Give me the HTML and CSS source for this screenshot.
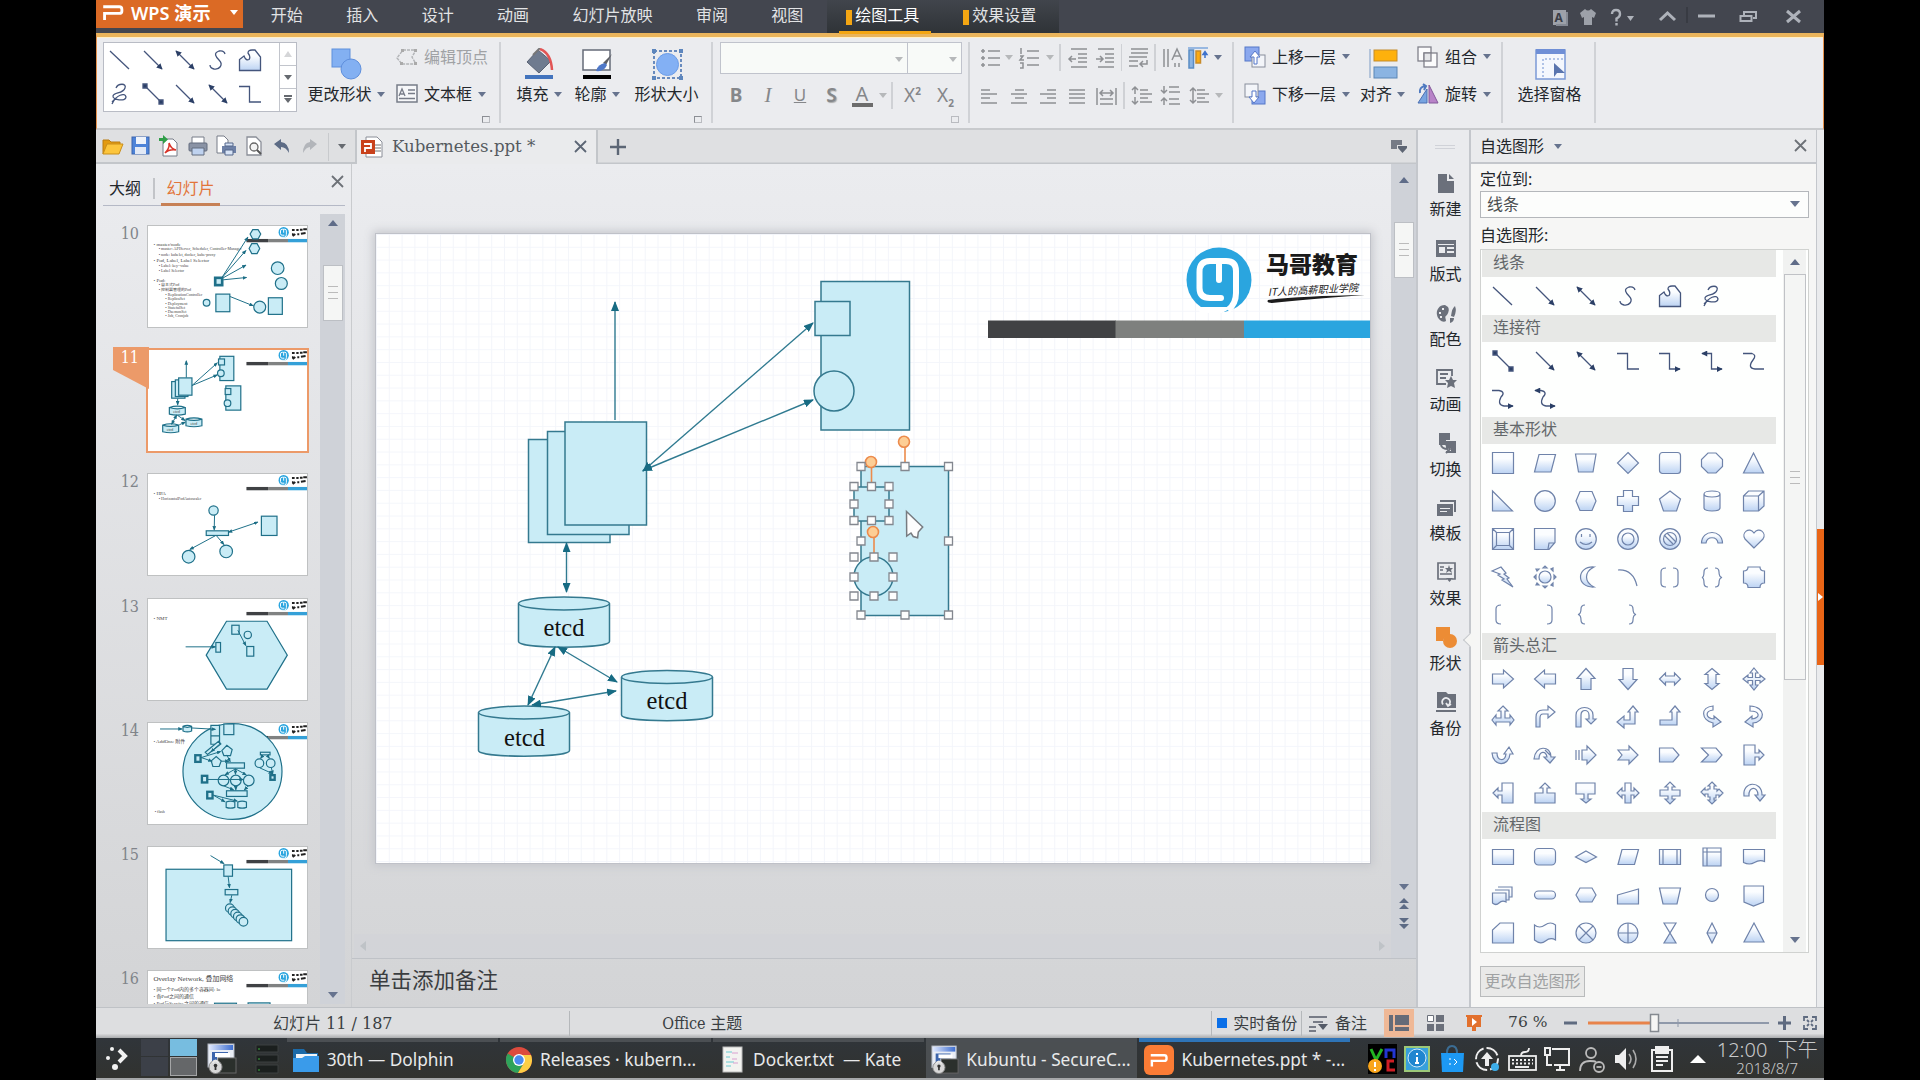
FILE: index.html
```html
<!DOCTYPE html>
<html lang="zh-CN">
<head>
<meta charset="utf-8">
<title>Kubernetes.ppt - WPS 演示</title>
<link rel="stylesheet" href="styles.css">
</head>
<body>
<svg class="defs" width="0" height="0">
  <defs>
    <linearGradient id="shade" x1="0" y1="0" x2="0" y2="1"><stop offset="0.3" stop-color="#fbfdff"/><stop offset="1" stop-color="#bcd3f3"/></linearGradient>
    <linearGradient id="term" x1="0" y1="0" x2="1" y2="0"><stop offset="0" stop-color="#dfe8ff"/><stop offset="1" stop-color="#3f6fd0"/></linearGradient>
    <marker id="tip" viewBox="0 0 10 8" refX="9" refY="4" markerWidth="10" markerHeight="8" markerUnits="userSpaceOnUse" orient="auto-start-reverse"><path d="M0 0L10 4L0 8z" fill="#176b83"/></marker>
    <marker id="tipS" viewBox="0 0 10 8" refX="8" refY="4" markerWidth="14" markerHeight="12" markerUnits="userSpaceOnUse" orient="auto-start-reverse"><path d="M0 0L10 4L0 8z" fill="#1b6d85"/></marker>
    <marker id="tipI" viewBox="0 0 8 8" refX="7" refY="4" markerWidth="6.500" markerHeight="6" markerUnits="userSpaceOnUse" orient="auto-start-reverse"><path d="M0 0L8 4L0 8z" fill="#2b3f66"/></marker>
    <symbol id="brand" viewBox="0 0 66 66">
      <circle cx="33" cy="33" r="32.5" fill="#2aa5df"/>
      <path d="M12 60H47L36 66H14z" fill="#fff"/>
      <path d="M33 33V14H24Q13.500 14 13.500 25V41Q13.500 51 24 51H35" fill="none" stroke="#fff" stroke-width="6" stroke-linecap="round"/>
      <path d="M33 14H40Q50 14 50 24V46Q50 57 42 63" fill="none" stroke="#fff" stroke-width="6"/>
    </symbol>
    <symbol id="head" viewBox="0 0 484 310">
      <rect x="299" y="42" width="65" height="10" fill="#3f4144"/><rect x="364" y="42" width="60" height="10" fill="#808282"/><rect x="424" y="42" width="60" height="10" fill="#34a0d8"/>
      <use href="#brand" x="395" y="6" width="32" height="32"/>
      <path d="M436 15h8M449 15h7M460 14h8M470 13h11M438 33l8-6M452 28h6M463 26l14-2M436 28h5" stroke="#222" stroke-width="6" fill="none"/>
    </symbol>
    <symbol id="securecrt" viewBox="0 0 30 32">
      <rect x="1" y="1" width="26" height="23" fill="#e9edf5" stroke="#aeb4bf"/><rect x="2" y="2" width="24" height="5" fill="url(#term)"/><path d="M5 9h16v5H10v9H5z" fill="#3b64ac"/><path d="M8 10h15v4H8z" fill="#fff"/>
      <rect x="11" y="15" width="18" height="15" fill="#2b302c" stroke="#666"/><circle cx="8.500" cy="24" r="6.500" fill="#d8d8d8" stroke="#888"/><path d="M5.500 20q3-5 6 0" stroke="#e8e8e8" stroke-width="2" fill="none"/><circle cx="8.500" cy="22.500" r="1.800" fill="#333"/><path d="M8.500 23v4" stroke="#333" stroke-width="1.800"/>
    </symbol>
    <symbol id="wpsmark" viewBox="0 0 24 18"><path d="M1 2H19Q22 2 22 5V7Q22 9.500 19 9.500H2.500V17" fill="none" stroke="#fff" stroke-width="3.200"/></symbol>
    <symbol id="i-line" viewBox="0 0 24 24"><path d="M2 3L21 21"/></symbol>
    <symbol id="i-arrow" viewBox="0 0 24 24"><path d="M3 3L21 21" marker-end="url(#tipI)"/></symbol>
    <symbol id="i-darrow" viewBox="0 0 24 24"><path d="M3 3L21 21" marker-end="url(#tipI)" marker-start="url(#tipI)"/></symbol>
    <symbol id="i-s" viewBox="0 0 24 24"><path d="M19 6Q18 2 13 3C7 5 10 9 13 12C18 17 13 22 8 21Q4 20 4 17"/></symbol>
    <symbol id="i-free" viewBox="0 0 24 24"><path d="M1.500 22.500V11.500L6 8Q8 13 11 11.500Q13 9 10 5Q10 2 14 2H17L22.500 9V22.500z" fill="url(#shade)"/></symbol>
    <symbol id="i-scrib" viewBox="0 0 24 24"><path d="M8 6C10 1 19 1 17 6C15 12 6 10 5 14C4 18 18 20 18 15C17 10 8 13 4 22M8 16l-4 4"/></symbol>
    <symbol id="i-conn" viewBox="0 0 24 24"><path d="M4 4L20 20"/><path d="M2 2h4v4H2zM18 18h4v4h-4z" fill="#2b3f66"/></symbol>
    <symbol id="i-elbow" viewBox="0 0 24 24"><path d="M1 4.500H11.500V20H23"/></symbol>
  </defs>
</svg>

<div class="app">
  <header class="titlebar">
    <div class="wps"><svg width="22" height="16"><use href="#wpsmark"/></svg><b>WPS 演示</b><i class="caret white"></i></div>
    <nav class="menu"><span>开始</span><span>插入</span><span>设计</span><span>动画</span><span>幻灯片放映</span><span>审阅</span><span>视图</span></nav>
    <nav class="context"><span class="on">绘图工具</span><span>效果设置</span></nav>
    <div class="winbtns">
      <svg width="272" height="33" fill="none" stroke="#aeb2ba" stroke-width="2.400">
        <rect x="1" y="10" width="13" height="15" fill="#9da1a9" stroke="none"/><path d="M15 12v13H4" stroke="#858a94" stroke-width="2"/><text x="2.500" y="22" font-size="12" font-weight="bold" fill="#3a3d46" stroke="none">A</text>
        <path d="M28 13l5-4q3 3 6 0l5 4-2 5-2-1v8h-8v-8l-2 1z" fill="#9da1a9" stroke="none"/>
        <path d="M60 14q0-4 4-4t4 4q0 3-3.500 4.500v3M64.500 23v2.500"/><path d="M75 16h7l-3.500 5z" fill="#aeb2ba" stroke="none"/>
        <path d="M108 20l7.500-7 7.500 7" stroke-width="3"/><path d="M135 7v16" stroke="#2e3138" stroke-width="1"/>
        <path d="M146 16h17" stroke-width="3"/><path d="M192 15V12h12v6h-3M188.500 16h11v5h-11z" stroke-width="2"/><path d="M235 11l13 11M248 11l-13 11" stroke-width="3"/>
      </svg>
    </div>
  </header>

  <section class="ribbon">
    <div class="group w1">
      <div class="main">
        <div class="gallery">
          <div class="cells">
            <svg><use href="#i-line"/></svg><svg><use href="#i-arrow"/></svg><svg><use href="#i-darrow"/></svg><svg><use href="#i-s"/></svg><svg><use href="#i-free"/></svg>
            <svg><use href="#i-scrib"/></svg><svg><use href="#i-conn"/></svg><svg><use href="#i-arrow"/></svg><svg><use href="#i-darrow"/></svg><svg><use href="#i-elbow"/></svg>
          </div>
          <div class="spin"><span><i class="caret up pale"></i></span><span><i class="caret grey"></i></span><span class="more"><i class="caret grey"></i></span></div>
        </div>
        <div class="big c88"><svg width="32" height="32"><rect x="2" y="1" width="18" height="18" fill="#83b0f2" stroke="#5f8fdc"/><circle cx="21" cy="21" r="10" fill="#83b0f2" stroke="#5f8fdc"/></svg><div>更改形状<i class="caret"></i></div></div>
        <div class="pair ml6">
          <div class="row off"><svg width="22" height="18" fill="none" stroke="#b2b4b7" stroke-width="1.400"><path d="M7 2H20L16 9L20 16H6L1 10z" stroke-dasharray="3 1"/><path d="M5 1h3v3H5zM18 1h3v3h-3zM18 14h3v3h-3zM4 14h3v3H4z" fill="#aaa" stroke="none"/></svg>编辑顶点</div>
          <div class="row"><svg width="22" height="20" fill="none" stroke="#777c88"><rect x="1" y="1" width="20" height="17" fill="#f6f7f9" stroke-width="1.500"/><path d="M12 6h7M12 9.500h7M3 14.500h16M3 12l3-7 3 7M4.500 10h3.500" stroke-width="1.300"/></svg>文本框<i class="caret"></i></div>
        </div>
      </div>
      <i class="launch"></i>
    </div>
    <div class="group w2">
      <div class="main pl9">
        <div class="big c58"><svg width="32" height="32"><path d="M4 14L15 2L28 13L16 25z" fill="#6f7b8f" stroke="#596274"/><path d="M10 7L17 0" stroke="#777" stroke-width="2"/><path d="M17 1Q28 5 29 22" fill="none" stroke="#e25555" stroke-width="2.500"/><rect x="2" y="27" width="28" height="4" fill="#4374bd"/></svg><div>填充<i class="caret"></i></div></div>
        <div class="big c58"><svg width="32" height="32"><rect x="2" y="2" width="27" height="20" fill="#fff" stroke="#666b78" stroke-width="1.500"/><path d="M31 6L25 17l-3-2z" fill="#5e6067"/><path d="M24 15q-7 1-9 8 8 1 11-6z" fill="#4f78c8"/><rect x="2" y="27" width="28" height="4" fill="#000"/></svg><div>轮廓<i class="caret"></i></div></div>
        <div class="big c81"><svg width="32" height="32"><rect x="3" y="3" width="27" height="27" fill="none" stroke="#3f6baf" stroke-width="1.500" stroke-dasharray="3 2"/><circle cx="16.500" cy="16.500" r="11" fill="#83b0f4" stroke="#6b9ce8"/><path d="M1 1h4v4H1zM28 1h4v4h-4zM1 28h4v4H1zM28 28h4v4h-4z" fill="#5d86bd"/></svg><div>形状大小</div></div>
      </div>
      <i class="launch"></i>
    </div>
    <div class="group w3">
      <div class="main col pl8">
        <div class="combo"><span><i class="caret pale"></i></span><span><i class="caret pale"></i></span></div>
        <div class="fmt">
          <b>B</b><em>I</em><u>U</u><strong>S</strong><span class="fa">A</span><i class="caret pale"></i><i class="vs"></i><span>X<sup>2</sup></span><span>X<sub>2</sub></span>
        </div>
      </div>
      <i class="launch pale"></i>
    </div>
    <div class="group w4">
      <div class="main col gap9">
        <div class="tools t1">
          <svg><path d="M8 3h12M8 10h12M8 17h12M1 3h4M3 1v4M1 10h4M3 8v4M1 17h4M3 15v4"/></svg><i class="caret pale"></i>
          <svg><path d="M8 3h12M8 10h12M8 17h12M2 0v6M1 8h3l-3 4h4M1 15h3v5H1"/></svg><i class="caret pale"></i><i class="vs"></i>
          <svg><path d="M3 1h16M10 6h9M10 10h9M10 14h9M3 19h16M1 11h7M4 8l-3 3 3 3"/></svg><svg><path d="M3 1h16M10 6h9M10 10h9M10 14h9M3 19h16M1 11h7M5 8l3 3-3 3"/></svg><i class="vs"></i>
          <svg><path d="M3 1h17M3 5h17M1 9h18M1 13h9M1 18h9M19 12v4h-6M15 13l-3 3 3 3"/></svg><i class="vs"></i>
          <svg><path d="M2 1v18M6 1v18M10 12l5-11 5 11M12 8h6M13 15v4M17 15v4"/></svg>
          <svg class="vivid"><path d="M0 0h20" stroke="#7da7dc"/><rect x="1" y="2" width="4.500" height="18" fill="#8ab4e4" stroke="#5a8cc4"/><rect x="8" y="3" width="4.500" height="12" fill="#faab13" stroke="#c98c2a"/><path d="M17 10V4M15 6.500l2-3 2 3z" stroke="#3e72cc" fill="#3e72cc"/></svg><i class="caret"></i>
        </div>
        <div class="tools t2">
          <svg><path d="M2 4h9M2 8h16M2 12h9M2 17h16"/></svg><svg><path d="M6 4h9M2 8h16M6 12h9M2 17h16"/></svg><svg><path d="M9 4h9M2 8h16M9 12h9M2 17h16"/></svg><svg><path d="M2 4h16M2 8h16M2 12h16M2 17h16"/></svg>
          <svg><path d="M1 2v17M20 2v17M4 7h13M7 4l-3 3 3 3M14 4l3 3-3 3M4 13h13M4 18h13"/></svg><i class="vs"></i>
          <svg><path d="M9 4h8M9 8h12M9 12h8M9 16h12M4 2v6M4 11v6M1 4l3-3 3 3M1 15l3 3 3-3"/></svg><svg><path d="M9 1h10M9 6h11M9 13h10M9 18h11M4 0v6M4 12v7M1 4l3 3 3-3M1 15l3-3 3 3"/></svg><svg><path d="M8 4h8M8 8h12M8 12h8M8 16h12M4 2v15M1 5l3-3 3 3M1 14l3 3 3-3"/></svg><i class="caret pale"></i>
        </div>
      </div>
    </div>
    <div class="group w5">
      <div class="main pl11">
        <div class="pair w110">
          <div class="row"><svg width="22" height="22"><rect x="1" y="1" width="14" height="14" fill="#8ba8ee" stroke="#5577c8"/><rect x="8" y="9" width="13" height="12" fill="#f3f5f9" stroke="#888d9c"/><path d="M10 18V11H6L11 5L16 11H13V18z" fill="#fff" stroke="#5577c8"/></svg>上移一层<i class="caret"></i></div>
          <div class="row"><svg width="22" height="22"><rect x="8" y="8" width="13" height="13" fill="#8ba8ee" stroke="#5577c8"/><rect x="1" y="1" width="13" height="13" fill="#f3f5f9" stroke="#888d9c"/><path d="M8 8V14H5L10 20L15 14H12V8z" fill="#fff" stroke="#5577c8"/></svg>下移一层<i class="caret"></i></div>
        </div>
        <div class="big c57"><svg width="32" height="32"><path d="M3 1v29" stroke="#7d9cc4"/><rect x="7" y="2" width="23" height="11" fill="#feb10c" stroke="#c48b2c"/><rect x="7" y="19" width="23" height="11" fill="#8bb4e2" stroke="#5b86b6"/></svg><div>对齐<i class="caret"></i></div></div>
        <div class="pair ml6">
          <div class="row"><svg width="22" height="22" fill="#fbfbfc" stroke="#80808a" stroke-width="1.300"><rect x="1" y="1" width="13" height="14"/><rect x="7" y="7" width="13" height="14"/><rect x="7" y="7" width="7" height="8" fill="#e4e5e8"/></svg>组合<i class="caret"></i></div>
          <div class="row"><svg width="22" height="22"><path d="M10 6V20H1z" fill="#78a4e0" stroke="#4a6fb2"/><path d="M12 2V20H21z" fill="#b883c8" stroke="#83599a"/><path d="M3 10q-1-6 5-7M6 1l3 2-2 4" fill="none" stroke="#4f7ac0" stroke-width="2"/></svg>旋转<i class="caret"></i></div>
        </div>
      </div>
    </div>
    <div class="group w6">
      <div class="main"><div class="big c93"><svg width="32" height="32"><rect x="2" y="2" width="29" height="29" fill="#f4f7fd" stroke="#7b99d6" stroke-width="1.500"/><rect x="2" y="1" width="29" height="5" fill="#6f8fd6"/><path d="M9 29V11H30" fill="none" stroke="#6d8fd0" stroke-dasharray="2 2"/><path d="M20 15V29L23 25H31z" fill="#5a75ae"/></svg><div>选择窗格</div></div></div>
    </div>
  </section>

  <div class="body">
    <div class="work">
      <div class="tabbar">
        <div class="quick">
          <svg width="22" height="22"><path d="M1 19V5h6l2 2h9v3" fill="#e39a11" stroke="#b97d12"/><path d="M1 19L5 9H21L17 19z" fill="#fcc53c" stroke="#c98e1b"/></svg>
          <svg width="22" height="22"><rect x="2" y="2" width="17" height="17" fill="#4d83d8" stroke="#3c64ad"/><rect x="6" y="2" width="10" height="7" fill="#eef3fb"/><rect x="5" y="12" width="11" height="7" fill="#e2e9f5"/></svg>
          <svg width="22" height="22"><path d="M5 4H15l4 4V21H5z" fill="#fff" stroke="#777c88"/><path d="M7 18q5-5 4-10 2 6 7 7-7-1-11 3z" fill="none" stroke="#d83328" stroke-width="1.600"/><path d="M1 3h4V0l5 4.500-5 4.500V6H1z" fill="#2f9e48"/></svg>
          <svg width="22" height="22"><path d="M5 8V2H17V8" fill="#fff" stroke="#777c88"/><rect x="2" y="8" width="18" height="8" rx="1" fill="#8a93a5" stroke="#636c7e"/><path d="M5 13H17V20H5z" fill="#bfd2ef" stroke="#636c7e"/></svg>
          <svg width="22" height="22"><path d="M2 1H9l4 4V18H2z" fill="#fff" stroke="#777c88"/><rect x="7" y="11" width="14" height="7" fill="#6d80a6"/><path d="M10 8h8v3h-8zM10 15h8v5h-8z" fill="#d7e3f6" stroke="#55668a"/></svg>
          <svg width="22" height="22"><path d="M4 2H13l5 5V20H4z" fill="#fff" stroke="#8a8e98" stroke-width="1.300"/><circle cx="11" cy="12" r="4" fill="#f4f4f4" stroke="#666" stroke-width="1.300"/><path d="M14 15l4 4" stroke="#555" stroke-width="2"/></svg>
          <svg width="22" height="22"><path d="M3 9L10 4V7Q18 8 18 18Q15 12 10 12V15z" fill="#5c6b85"/></svg>
          <svg width="22" height="22"><path d="M18 9L11 4V7Q4 8 4 18Q7 12 11 12V15z" fill="#b2b5ba"/></svg>
        </div>
        <div class="qmore"><i class="caret grey"></i></div>
        <div class="doc"><svg width="24" height="24"><path d="M6 2H17l5 5V22H6z" fill="#fff" stroke="#8a8e98"/><path d="M15 10h6M15 13h6M15 16h6" stroke="#777"/><rect x="1" y="5" width="14" height="14" fill="#c9421c"/><path d="M4 9h7v4H5v4" fill="none" stroke="#fff" stroke-width="1.800"/></svg><span class="lat">Kubernetes.ppt *</span><svg class="x" width="14" height="14"><path d="M1 1l11 11M12 1L1 12"/></svg></div>
        <svg class="plus" width="18" height="18"><path d="M9 1v16M1 9h16"/></svg>
        <svg class="corner" width="18" height="16"><path d="M1 1h11v5h-5v4H1z" fill="#767b86"/><path d="M8 7h9v2l-4.500 5L8 9z" fill="#5d6573"/></svg>
      </div>
      <div class="desk">
        <aside class="slides">
          <div class="ptabs"><span>大纲</span><i></i><span class="on">幻灯片</span><svg class="x" width="14" height="14"><path d="M1 1l11 11M12 1L1 12"/></svg></div>
          <div class="plist">
            <div class="thumbs">
              <div class="th"><label>10</label><svg viewBox="173 193 484 310"><use href="#head" x="173" y="193" width="484" height="310"/>
                <g class="tt"><text x="192" y="256">• master/node</text><text x="208" y="269" class="s">• master: APIServer, Scheduler, Controller-Manager</text><text x="208" y="285" class="s">• node: kubelet, docker, kube-proxy</text><text x="192" y="305">• Pod, Label, Label Selector</text><text x="208" y="318" class="s">• Label: key=value</text><text x="208" y="333" class="s">• Label Selector</text><text x="192" y="366">• Pod:</text><text x="208" y="378" class="s">• 自主式Pod</text><text x="208" y="393" class="s">• 控制器管理的Pod</text><text x="228" y="406" class="s">• ReplicationController</text><text x="228" y="418" class="s">• ReplicaSet</text><text x="228" y="434" class="s">• Deployment</text><text x="228" y="446" class="s">• StatefulSet</text><text x="228" y="458" class="s">• DaemonSet</text><text x="228" y="470" class="s">• Job, Cronjob</text></g>
                <g class="sh"><path d="M483 220l8-13h16l8 13-8 15h-16zM480 264l8-15h16l8 15-8 15h-16z"/><circle cx="566" cy="323" r="19"/><circle cx="577" cy="369" r="18"/><circle cx="352" cy="427" r="10"/><circle cx="512" cy="440" r="18"/><rect x="380" y="401" width="42" height="53"/><rect x="538" y="412" width="42" height="50"/><rect x="378" y="352" width="21" height="22" stroke-width="8"/></g>
                <g class="ar"><path d="M399 350L476 230"/><path d="M400 350L470 270"/><path d="M402 352L470 314"/><path d="M402 358L472 351"/><path d="M422 408L492 436"/></g></svg></div>
              <div class="th sel"><svg class="flag" viewBox="0 0 36 42"><path d="M0 0H36V42L0 23z" fill="#ec9a69"/></svg><label>11</label><svg viewBox="173 569 484 310"><use href="#head" x="173" y="566" width="484" height="310"/>
                <g class="sh"><rect x="392" y="591" width="42" height="73"/><rect x="388" y="599" width="18" height="18"/><circle cx="395" cy="642" r="10"/><rect x="410" y="680" width="45" height="73"/><rect x="408" y="688" width="17" height="18"/><circle cx="415" cy="732" r="10"/><rect x="247" y="667" width="40" height="50"/><rect x="258" y="662" width="38" height="50"/><rect x="268" y="656" width="40" height="52"/><path d="M240 745q24-8 48 0v20q-24 6-48 0zq24 8 48 0M290 780q24-8 48 0v20q-24 6-48 0zq24 8 48 0M220 798q24-8 48 0v20q-24 6-48 0zq24 8 48 0"/></g>
                <g class="ar"><path d="M291 655V605"/><path d="M308 679L384 611"/><path d="M308 679L384 647"/><path d="M265 719V737"/><path d="M262 768L247 795" marker-start="url(#tipS)"/><path d="M265 769L287 784"/><path d="M270 797l18-8"/></g><g class="tt s"><text x="252" y="763">etcd</text><text x="304" y="797">etcd</text><text x="232" y="816">etcd</text></g></svg></div>
              <div class="th"><label>12</label><svg viewBox="173 938 484 310"><use href="#head" x="173" y="938" width="484" height="310"/><g class="tt"><text x="192" y="1005">• HPA</text><text x="208" y="1018" class="s">• HorizontalPodAutoscaler</text></g>
                <g class="sh"><circle cx="373" cy="1051" r="14"/><rect x="351" y="1112" width="67" height="14"/><circle cx="298" cy="1190" r="19"/><circle cx="411" cy="1174" r="19"/><rect x="517" y="1068" width="47" height="58"/></g><g class="ar"><path d="M376 1065L375 1109"/><path d="M418 1116L506 1086" marker-start="url(#tipS)"/><path d="M378 1127L302 1168"/><path d="M382 1127L404 1153"/></g></svg></div>
              <div class="th"><label>13</label><svg viewBox="173 51 484 310"><use href="#head" x="173" y="51" width="484" height="310"/><g class="tt"><text x="192" y="118">• NMT</text></g>
                <g class="sh"><path d="M351 223L412 121H534L595 223L534 325H412z"/><rect x="428" y="133" width="22" height="27"/><circle cx="476" cy="162" r="11"/><rect x="380" y="185" width="14" height="29"/><rect x="473" y="197" width="21" height="29"/></g><g class="ar"><path d="M289 198H378"/><path d="M446 148L470 194"/></g></svg></div>
              <div class="th"><label>14</label><svg viewBox="173 423 484 310"><use href="#head" x="173" y="423" width="484" height="310"/><g class="sh"><ellipse cx="430" cy="572" rx="149" ry="144"/><rect x="404" y="429" width="30" height="32"/><path d="M365 433h26v32h-26zM365 465h26v25h-26z"/><path d="M281 436q13-6 26 0v14q-13 6-26 0zq13 6 26 0"/><path d="M348 514l40-33 7 8-40 32zM398 509l15-16 16 13-5 18h-20zM366 540l15-13 15 13-6 17h-19z"/><rect x="412" y="546" width="54" height="16"/><rect x="412" y="630" width="62" height="17"/><circle cx="403" cy="599" r="16"/><circle cx="440" cy="599" r="16"/><circle cx="479" cy="599" r="16"/><circle cx="511" cy="547" r="13"/><circle cx="545" cy="547" r="13"/><rect x="514" y="514" width="29" height="8"/><rect x="544" y="583" width="13" height="14" stroke-width="7"/><rect x="318" y="523" width="16" height="20" stroke-width="7"/><rect x="338" y="585" width="16" height="20" stroke-width="7"/><rect x="354" y="633" width="16" height="20" stroke-width="7"/><path d="M411 664q13-6 26 0v16q-13 5-26 0zM446 664q13-6 26 0v16q-13 5-26 0z"/></g>
                <g class="ar"><path d="M212 444H278"/><path d="M308 441L378 445"/><path d="M391 440v50L366 512"/><path d="M336 530L394 512"/><path d="M336 530L368 541"/><path d="M413 522l10 20"/><path d="M395 541h24"/><path d="M356 596H462"/><path d="M439 564L408 582"/><path d="M439 564v16"/><path d="M439 564l32 18"/><path d="M403 615l30 12"/><path d="M440 615v12"/><path d="M478 615l-12 12"/><path d="M372 643l35 20"/><path d="M372 643l72 18"/><path d="M512 561l38 17"/><path d="M547 560l4 20"/><path d="M521 524l-6 8"/><path d="M535 524l6 8"/></g><g class="tt"><text x="192" y="486">• AddOns: 附件</text><text x="196" y="697" class="s">• flash</text></g></svg></div>
              <div class="th"><label>15</label><svg viewBox="173 796 484 310"><use href="#head" x="173" y="796" width="484" height="310"/><g class="sh"><rect x="230" y="866" width="378" height="215"/><rect x="404" y="853" width="26" height="34"/><rect x="408" y="927" width="38" height="16"/><circle cx="422" cy="983" r="13"/><circle cx="430" cy="992" r="13"/><circle cx="438" cy="1000" r="13"/><circle cx="446" cy="1008" r="13"/><circle cx="454" cy="1016" r="13"/><circle cx="463" cy="1024" r="13"/></g><g class="ar"><path d="M364 825L404 849"/><path d="M417 888L421 921"/><path d="M428 944L423 966"/></g></svg></div>
              <div class="th"><label>16</label><svg viewBox="173 1168 484 310"><use href="#head" x="173" y="1168" width="484" height="310"/><g class="tt"><text x="192" y="1200" class="b">Overlay Network, 叠加网络</text><text x="192" y="1232" class="m">• 同一个Pod内的多个容器间: lo</text><text x="192" y="1253" class="m">• 各Pod之间的通信</text><text x="192" y="1273" class="m">• Pod与Service之间的通信</text></g><g class="sh"><rect x="376" y="1268" width="66" height="60"/><rect x="477" y="1267" width="66" height="60"/></g></svg></div>
            </div>
            <div class="vbar"><i class="caret up"></i><div class="knob"></div><i class="caret end"></i></div>
          </div>
        </aside>
        <main class="editor">
          <div class="stage">
            <div class="canvas">
              <svg class="slide" viewBox="376 234 994 629" width="994" height="629">
                <rect x="988" y="320.500" width="128" height="17.500" fill="#414244"/><rect x="1115.500" y="320.500" width="128.500" height="17.500" fill="#7e807e"/><rect x="1244" y="320.500" width="126" height="17.500" fill="#2aa5df"/>
                <use href="#brand" x="1186" y="247" width="66" height="66"/>
                <text x="1266" y="273" class="mg">马哥教育</text>
                <text class="it" transform="translate(1268 296) rotate(-3)">IT人的高薪职业学院</text>
                <path d="M1268 300Q1300 296 1365 295Q1310 299 1272 303Q1266 303 1268 300z" fill="#1c1c1c"/>
                <g class="shape">
                  <rect x="821" y="281.500" width="88.500" height="148.500"/><rect x="815" y="301.500" width="35" height="34"/><circle cx="834" cy="391" r="20"/>
                  <rect x="528.500" y="439.500" width="81.500" height="103"/><rect x="547.500" y="431.500" width="81.500" height="103"/><rect x="565" y="422" width="81.500" height="103"/>
                  <path d="M518.500 603.500V641.500C518.500 649 609.500 649 609.500 641.500V603.500"/><ellipse cx="564" cy="603.500" rx="45.500" ry="6.500"/>
                  <path d="M621.500 677V715C621.500 722.500 712.500 722.500 712.500 715V677"/><ellipse cx="667" cy="677" rx="45.500" ry="6.500"/>
                  <path d="M478.500 712.500V750.500C478.500 758 569.500 758 569.500 750.500V712.500"/><ellipse cx="524" cy="712.500" rx="45.500" ry="6.500"/>
                  <rect x="861" y="466.500" width="87.500" height="149"/><rect x="854" y="487" width="35" height="34"/><circle cx="873.500" cy="576.500" r="19.500"/>
                </g>
                <g class="wire"><path d="M615 420V302"/><path d="M643 471L813 323" class="both"/><path d="M643 470.500L813 400" class="both"/><path d="M566.500 543V592" class="both"/><path d="M555 647L528 705" class="both"/><path d="M558 647L617 682" class="both"/><path d="M532 705L616 691" class="both"/></g>
                <g class="etcd"><text x="564" y="636">etcd</text><text x="667" y="709">etcd</text><text x="524.500" y="746">etcd</text></g>
                <g stroke="#ec8b4c" fill="#fdce95" stroke-width="1.600"><path d="M905 447V463M871.500 468V483M874 538V553"/><circle cx="904" cy="441.700" r="5.500"/><circle cx="871" cy="462" r="5.500"/><circle cx="873" cy="532" r="5.500"/></g>
                <path class="grips" d="M857 462.500h8v8h-8zM901 462.500h8v8h-8zM944.500 462.500h8v8h-8zM857 537h8v8h-8zM944.500 537h8v8h-8zM857 611h8v8h-8zM901 611h8v8h-8zM944.500 611h8v8h-8zM850 482.500h8v8h-8zM867.500 482.500h8v8h-8zM885 482.500h8v8h-8zM850 500h8v8h-8zM885 500h8v8h-8zM850 516.500h8v8h-8zM867.500 516.500h8v8h-8zM885 516.500h8v8h-8zM850 553h8v8h-8zM870 553h8v8h-8zM889 553h8v8h-8zM850 573h8v8h-8zM889 573h8v8h-8zM850 592h8v8h-8zM870 592h8v8h-8zM889 592h8v8h-8z"/>
                <path d="M906.500 511.500L922.700 527L918.300 532L917.600 537.800L913.200 536.500L911 533L906.700 536z" fill="#fdfdfd" stroke="#777b80" stroke-width="1.500"/>
              </svg>
              <div class="hbar"><i class="la"></i><i class="ra"></i></div>
            </div>
            <div class="vbar ed"><i class="caret up"></i><div class="knob"></div><i class="caret end"></i><svg width="12" height="36"><path d="M1 7l5-5 5 5zM1 13l5-5 5 5zM1 22l5 5 5-5zM1 28l5 5 5-5z" fill="#5d6b85"/></svg></div>
          </div>
          <div class="notes">单击添加备注</div>
        </main>
      </div>
    </div>

    <nav class="strip">
      <i class="grip"></i>
      <div><svg><path d="M3 2h9v7h7v12H3zM14 2l5 5h-5z"/></svg>新建</div>
      <div><svg><path fill-rule="evenodd" d="M1 3h20v17H1zM3 7v1h16V7zM4 10v6h6v-6zM12 10v2h7v-2zM12 14v2h7v-2z"/></svg>版式</div>
      <div><svg><path fill-rule="evenodd" d="M10 3C4 3 1 8 2 13S8 21 11 19C11 16 9 15 12 13Q15 8 13 5zM7 6h2v2H7zM4 10h2v2H4zM5 14h2v2H5z"/><path d="M20 4Q17 6 16 14l3 1q3-6 1-11zM15 16h4q0 4-4 5z"/></svg>配色</div>
      <div><svg><path d="M17 9V3H2v14h9M5 7h8M5 11h6" fill="none" stroke="#6b707b" stroke-width="1.800"/><path d="M16 9l2 4h4l-3 3 1 5-4-2-4 2 1-5-3-3h4z"/></svg>动画</div>
      <div><svg><path d="M4 1h11v7H11v5H4zM11 9h10v12H11v-2h5v-3h-5z"/><path d="M6 13q1 4 7 4M11 13l4 4-4 4" fill="none" stroke="#6b707b" stroke-width="2"/></svg>切换</div>
      <div><svg><path fill-rule="evenodd" d="M2 8h16v12H2zM5 12v1h10v-1zM5 15v1h7v-1z"/><path d="M5 5h15v11" fill="none" stroke="#6b707b" stroke-width="2"/></svg>模板</div>
      <div><svg><path d="M12 18H3V2h17v16h-3M5 6h4M5 9h3M5 13h12" fill="none" stroke="#6b707b" stroke-width="1.700"/><path d="M14 4l1 3h3l-2 2 1 3-3-2-3 2 1-3-2-2h3zM11 17h7l-3.500 4z"/></svg>效果</div>
      <div class="on"><svg><path d="M1 1h14v8a8 8 0 0 0-7 6H1z"/><circle cx="15" cy="15" r="7"/></svg>形状</div>
      <div><svg><path fill-rule="evenodd" d="M2 1h9l2 2h8v14H2z"/><path d="M8 13.500a4 4 0 1 1 5 1M11 12l2 3 3-2" fill="none" stroke="#eaebee" stroke-width="1.800"/><path d="M1 19h20v2H1z"/></svg>备份</div>
    </nav>

    <aside class="panel">
      <header><span>自选图形</span><i class="caret"></i><svg class="x" width="14" height="14"><path d="M1 1l11 11M12 1L1 12"/></svg></header>
      <div class="pbody">
        <p>定位到:</p>
        <div class="select">线条<i class="caret lg"></i></div>
        <p class="second">自选图形:</p>
        <div class="lib">
          <div class="libs">
            <h4>线条</h4>
            <div class="sg"><svg><use href="#i-line"/></svg><svg><use href="#i-arrow"/></svg><svg><use href="#i-darrow"/></svg><svg><use href="#i-s"/></svg><svg><use href="#i-free"/></svg><svg><use href="#i-scrib"/></svg></div>
            <h4>连接符</h4>
            <div class="sg"><svg><use href="#i-conn"/></svg><svg><use href="#i-arrow"/></svg><svg><use href="#i-darrow"/></svg><svg><use href="#i-elbow"/></svg><svg class="n"><path d="M1 4.500H11.500V20H22" marker-end="url(#tipI)"/></svg><svg class="n"><path d="M2 4.500H11.500V20H22" marker-end="url(#tipI)" marker-start="url(#tipI)"/></svg><svg class="n"><path d="M1 4.500H10Q15 6 11 11Q5 19 13 20H22"/></svg>
            <svg class="n"><path d="M1 4.500H8Q15 6 10 11Q6 19 13 20H22" marker-end="url(#tipI)"/></svg><svg class="n"><path d="M2 4.500H8Q15 6 10 11Q6 19 13 20H22" marker-end="url(#tipI)" marker-start="url(#tipI)"/></svg></div>
            <h4>基本形状</h4>
            <div class="sg f">
              <svg><path d="M1.500 1.500h21v21h-21z"/></svg><svg><path d="M6 3.500h16.500L18 21H1.500z"/></svg><svg><path d="M1.500 3h20.500L19 21H4.500z"/></svg><svg><path d="M12 1.500L22.500 12L12 22.500L1.500 12z"/></svg><svg><rect x="1.500" y="1.500" width="21" height="21" rx="3"/></svg><svg><path d="M8 2h8l6.500 6.500v7L16 22H8l-6.500-6.500v-7z"/></svg><svg><path d="M11.500 2L21.500 22h-20z"/></svg>
              <svg><path d="M1.500 2v20h20z"/></svg><svg><circle cx="12" cy="12" r="10.300"/></svg><svg><path d="M6 2.500h12l4 9.500-4 9.500H6L2 12z"/></svg><svg><path d="M7.500 1.500h9v6h6v9h-6v6h-9v-6h-6v-9h6z"/></svg><svg><path d="M12 2l10.500 8-4 12h-13l-4-12z"/></svg><svg><path d="M4 5c0-4 16-4 16 0v14c0 4-16 4-16 0zc0 4 16 4 16 0"/></svg><svg><path d="M1.500 7h15v15h-15zL6.500 2H22v15l-5.500 5M16.500 7L22 2"/></svg>
              <svg><path d="M1.500 1.500h21v21h-21zM5.500 5.500h13v13h-13zM1.500 1.500l4 4M22.500 1.500l-4 4M1.500 22.500l4-4M22.500 22.500l-4-4"/></svg><svg><path d="M1.500 1.500h20.500v14l-6 7H1.500zM15 22l1-6h6"/></svg><svg><circle cx="12" cy="12" r="10.300"/><path d="M7.500 7v3M16 7v3M6 15q6 5 12 0"/></svg><svg><circle cx="12" cy="12" r="10.300"/><circle cx="12" cy="12" r="6"/></svg><svg><circle cx="12" cy="12" r="10.300"/><circle cx="12" cy="12" r="6.500"/><path d="M6 8l9 9M9 6l9 9"/></svg><svg><path d="M1.500 16C2 2 22 2 22.500 16H18C17 9 7 9 6 16z"/></svg><svg><path d="M12 21L3 12C-1 6 7-1 12 6C17-1 25 6 21 12z"/></svg>
              <svg><path d="M1 6l9-4 5 6-2 1 5 4-2 1 6 8-11-7 2-1-6-4 2-1z"/></svg><svg><circle cx="12" cy="12" r="6"/><path d="M10 3h4l-2-2zM10 21h4l-2 2zM3 10v4l-2-2zM21 10v4l2-2zM4 6l2-2H3zM18 4l2 2V3zM4 18l2 2H3zM18 20l2-2v3z"/></svg><svg><path d="M20 2C2 1 2 23 20 22C10 17 10 7 20 2z"/></svg><svg><path d="M2 5Q17 4 21 21" fill="none"/></svg><svg><path d="M8 3Q3 3 3 7V18Q3 22 8 22M15 3Q20 3 20 7V18Q20 22 15 22" fill="none"/></svg><svg><path d="M8 3Q4 3 4 7Q4 12 2 12.500Q4 13 4 18Q4 22 8 22M15 3Q19 3 19 7Q19 12 22 12.500Q19 13 19 18Q19 22 15 22" fill="none"/></svg><svg><path d="M6 2h12Q18 6 22.500 6v12Q18 18 18 22.500H6Q6 18 1.500 18V6Q6 6 6 2z"/></svg>
              <svg><path d="M10 3Q5 3 5 7V18Q5 22 10 22" fill="none"/></svg><svg><path d="M14 3Q19 3 19 7V18Q19 22 14 22" fill="none"/></svg><svg><path d="M11 3Q7 3 7 7Q7 12 4 12.500Q7 13 7 18Q7 22 11 22" fill="none"/></svg><svg><path d="M13 3Q17 3 17 7Q17 12 20 12.500Q17 13 17 18Q17 22 13 22" fill="none"/></svg>
            </div>
            <h4>箭头总汇</h4>
            <div class="sg f">
              <svg><path d="M1.500 7h11V3l10 9-10 9v-4h-11z"/></svg><svg><path d="M22.500 7h-11V3l-10 9 10 9v-4h11z"/></svg><svg><path d="M7 22.500v-11H3l9-10 9 10h-4v11z"/></svg><svg><path d="M7 1.500v11H3l9 10 9-10h-4v-11z"/></svg><svg><path d="M1.500 12l6-6v3h9V6l6 6-6 6v-3h-9v3z"/></svg><svg><path d="M12 1.500l7 6h-3v9h3l-7 6-7-6h3v-9H5z"/></svg><svg><path d="M12 1l4 5h-2.500v4.500h4.500V8l5 4-5 4v-2.500h-4.500v4.500H16l-4 5-4-5h2.500v-4.500H6V16l-5-4 5-4v2.500h4.500V6H8z"/></svg>
              <svg><path d="M12 1l5 5h-3v7h5v-3l4 5-4 5v-3H5v3l-4-5 4-5v3h5V6H7z"/></svg><svg><path d="M3 22V12Q3 5 10 5h5V1l7 6-7 6V9h-5Q7 9 7 13v9z"/></svg><svg><path d="M2 22V10C2 0 19 0 19 10v4h3l-5 5-5-5h3v-4C15 4 7 4 7 10v12z"/></svg><svg><path d="M17 1l5 6h-3v12H8v4l-7-6 7-6v4h6V7h-2z"/></svg><svg><path d="M17 1l5 6h-3v13H2v-5h12V7h-2z"/></svg><svg><path d="M13 1C0 2 1 15 13 18v4l8-5-7-6v3C5 13 5 6 13 5z"/></svg><svg><path d="M8 1C25 2 23 17 11 18v4l-8-5 7-6v3C19 13 18 6 8 6z"/></svg>
              <svg><path d="M1 10C2 24 18 24 19 11h3l-4-7-5 7h2C14 19 6 18 6 10z"/></svg><svg><path d="M1 16C2 2 18 2 18 14h4l-5 6-6-6h3C13 7 6 8 6 16zM12 7l5 5"/></svg><svg><path d="M2 7v10M5 7v10M8 7h5V3l9 9-9 9v-4H8z"/></svg><svg><path d="M2 7h11V3l9 9-9 9v-4H2l4-5z"/></svg><svg><path d="M1.500 5H15l6 7-6 7H1.500z"/></svg><svg><path d="M1.500 5H16l6 7-6 7H1.500l7-7z"/></svg><svg><path d="M2 2h11v8h4V7l5 5-5 5v-3h-4v8H2z"/></svg>
              <svg><path d="M22 2H11v8H7V7l-5 5 5 5v-3h4v8h11z"/></svg><svg><path d="M2 22V12h8V7H7l5-5 5 5h-3v5h8v10z"/></svg><svg><path d="M2 2v11h8v5H7l5 4 5-4h-3v-5h7V2z"/></svg><svg><path d="M9 2h6v8h3V7l5 5-5 5v-3h-3v8H9v-8H6v3l-5-5 5-5v3h3z"/></svg><svg><path d="M2 9v6h8v3H7l5 5 5-5h-3v-3h8V9h-8V6h3l-5-5-5 5h3v3z"/></svg><svg><path d="M12 1l4 4h-2v3h3v2l2-2 4 4-4 4v-2h-3v3h-2v2h2l-4 4-4-4h2v-3H8v-3H5v2l-4-4 4-4v2h3V8h2V5H8z"/></svg><svg><path d="M2 15C0 0 20-1 20 14h3l-5 6-5-6h3C16 5 6 5 7 15z"/></svg>
            </div>
            <h4>流程图</h4>
            <div class="sg f">
              <svg><path d="M1.500 4.500h21v15h-21z"/></svg><svg><rect x="1.500" y="3.500" width="21" height="16.500" rx="4"/></svg><svg><path d="M12 6l10.500 6L12 17.500 1.500 12z"/></svg><svg><path d="M6 4.500h16.500l-4 15H2z"/></svg><svg><path d="M1.500 4.500h21v15h-21zM5 4.500v15M19 4.500v15"/></svg><svg><path d="M3 3h18v18H3zM7 3v18M3 7h18"/></svg><svg><path d="M1.500 4.500h21v12q-5-2-10 1t-11 0z"/></svg>
              <svg><path d="M7 4h14v10h-3M4 7h14v10h-3M1.500 10H15v9q-4-2-7 1t-6.500 0z"/></svg><svg><rect x="1.500" y="8" width="21" height="8" rx="4"/></svg><svg><path d="M6 5h12l4 7-4 7H6l-4-7z"/></svg><svg><path d="M1.500 12l21-6v15h-21z"/></svg><svg><path d="M1.500 5h21L19 21H5z"/></svg><svg><circle cx="12" cy="12" r="6.500"/></svg><svg><path d="M2 3h19.500v16l-10 4-9.500-4z"/></svg>
              <svg><path d="M9 2h13.500v20h-21V9z"/></svg><svg><path d="M1.500 4q5 4 10.500 0t10.500 0v15q-5-3-10 1t-11-1z"/></svg><svg><circle cx="12" cy="12" r="10"/><path d="M5 5l14 14M19 5L5 19"/></svg><svg><circle cx="12" cy="12" r="10"/><path d="M12 2v20M2 12h20"/></svg><svg><path d="M6 2h12L6 22h12z"/></svg><svg><path d="M12 2l5 10-5 10-5-10zM7 12h10"/></svg><svg><path d="M12 2l10 19H2z"/></svg>
            </div>
          </div>
          <div class="lbar"><i class="caret up"></i><div class="knob"></div><i class="caret end"></i></div>
        </div>
        <button class="chg" disabled>更改自选图形</button>
      </div>
    </aside>
    <div class="edge"><div><i></i></div></div>
  </div>

  <footer class="status">
    <span class="s1">幻灯片 11 / 187</span><span class="s2">Office 主题</span>
    <span class="s3"><i class="blue"></i>实时备份</span>
    <span class="s4"><svg width="20" height="18"><path d="M0 3h18M4 8h10M0 13h7M0 17h7" stroke="#555b68" stroke-width="1.600"/><path d="M9 10h10l-5 6z" fill="#555b68"/></svg>备注</span>
    <span class="vw on"><svg width="20" height="18" fill="#646b78"><path d="M0 1h4v16H0zM6 1h14v10H6zM6 13h14v4H6z"/></svg></span>
    <span class="vw"><svg width="20" height="18" fill="#6b707b"><path d="M10 1h8v7h-8zM1 10h7v7H1zM10 10h8v7h-8z"/><path d="M1.500 1.500h6v6h-6z" fill="#fff" stroke="#6b707b"/></svg></span>
    <span class="vw"><svg width="18" height="18"><path d="M1 1h16v2h-1v10h-5v4H7v-4H2V3H1z" fill="#e2702d"/><path d="M7 4l5 4-5 4z" fill="#fff"/></svg></span>
    <span class="pct">76 %</span>
    <svg width="260" height="30" class="zoomer"><path d="M0 15h13M214 15h13M220.500 8v14" stroke="#5f6b80" stroke-width="3"/><path d="M24 15h66" stroke="#e8834a" stroke-width="3"/><path d="M95 15h110" stroke="#8f99aa" stroke-width="2"/><path d="M114 11v8" stroke="#8f99aa"/><rect x="86.500" y="6.500" width="8" height="17" fill="#f6f6f4" stroke="#858a90" stroke-width="1.500"/><path d="M240 13V9h4M248 9h4v4M252 17v4h-4M244 21h-4v-4M243 12l2 2M249 12l-2 2M243 18l2-2M249 18l-2-2" fill="none" stroke="#5f6b80" stroke-width="1.800"/></svg>
  </footer>

  <footer class="taskbar">
    <svg class="kick" width="26" height="26" fill="#f2f2f2"><circle cx="3" cy="13" r="2"/><circle cx="7" cy="4" r="2"/><circle cx="10" cy="22" r="3"/><path d="M14 5l6 6-6 6" fill="none" stroke="#f2f2f2" stroke-width="4"/></svg>
    <div class="pager"><i></i><i class="a"></i><i></i><i class="b"></i></div>
    <svg class="crt" width="30" height="32"><use href="#securecrt"/></svg>
    <svg class="srv" width="24" height="30"><path d="M1 1h22v7H1zM1 11h22v7H1zM1 21h22v8H1z" fill="#1b1f1e" stroke="#3d4140"/><path d="M3 5h2M3 15h2M3 26h2" stroke="#3fae3f"/></svg>
    <div class="task"><svg width="28" height="28"><path d="M1 3h11l3 4h11v6H1z" fill="#1c6aa8"/><path d="M4 8h21v5H4z" fill="#f2f5f8"/><path d="M1 12h9l3-2h14v16H1z" fill="#3a9bea"/></svg><span>30th — Dolphin</span></div>
    <div class="task"><svg width="28" height="28" viewBox="0 0 28 28"><circle cx="14" cy="14" r="13" fill="#dd4b3e"/><path d="M14 14L2.700 7.500A13 13 0 0 0 13 27L19 17z" fill="#2ea35b"/><path d="M14 9h12a13 13 0 0 1-13 18L19 17z" fill="#fdce45"/><circle cx="14" cy="14" r="6" fill="#fff"/><circle cx="14" cy="14" r="4.700" fill="#4a8bf0"/></svg><span>Releases · kubern...</span></div>
    <div class="task kate"><svg width="22" height="28"><rect x="1" y="1" width="19" height="25" fill="#f3f3f0" stroke="#bbb"/><path d="M4 6h6M4 11h4M4 16h8M4 20h5" stroke="#68cbd2"/><path d="M10 7h6M10 13h5M11 17h5" stroke="#d9a0d0"/></svg><span>Docker.txt&nbsp; — Kate</span></div>
    <div class="task hi"><svg width="28" height="30"><use href="#securecrt"/></svg><span>Kubuntu - SecureC...</span></div>
    <div class="task act"><svg width="30" height="30"><rect width="30" height="30" rx="6" fill="#fb7c35"/><use href="#wpsmark" x="6" y="8" width="18" height="15"/></svg><span>Kubernetes.ppt * -...</span></div>
    <div class="tray">
      <svg><rect x="1" y="0" width="29" height="30" fill="#000"/><path d="M4 5l5 11 6-11" fill="none" stroke="#22b422" stroke-width="3"/><path d="M19 14V6h8v8" fill="none" stroke="#2336d2" stroke-width="3"/><path d="M27 17h-6v9h7" fill="none" stroke="#cf1e25" stroke-width="3"/><circle cx="8" cy="22" r="7" fill="#f9a51b"/><path d="M8 18v5M8 25v2" stroke="#fff" stroke-width="2"/></svg>
      <svg><rect x="3" y="3" width="24" height="24" fill="#37a0dc" stroke="#9cc878" stroke-width="2"/><circle cx="15" cy="14" r="9" fill="#1f86d0" stroke="#cfe9fb"/><path d="M15 9v2M15 13v6M13 19h4" stroke="#fff" stroke-width="2"/></svg>
      <svg><path d="M4 9h23l-1 19H5z" fill="#1d99f3"/><path d="M10 9q0-7 5-7t5 7" fill="none" stroke="#3b6d94" stroke-width="2"/><path d="M12 15h2M12 20h2M17 15l3 3-3 3" stroke="#fff" fill="none"/></svg>
      <svg fill="none" stroke="#eee" stroke-width="2"><circle cx="15" cy="15" r="11" stroke-dasharray="14 3"/><path d="M13 22v-7h-4l6-7 6 7h-4v7z" fill="#eee" stroke="none"/><circle cx="23" cy="23" r="4" fill="#3daee9" stroke="none"/></svg>
      <svg fill="none" stroke="#eee" stroke-width="1.800"><rect x="2" y="12" width="27" height="14"/><path d="M5 16h21M5 19.500h21" stroke-dasharray="2 2"/><path d="M8 23h14M14 12q0-4 4-4t4-4"/></svg>
      <svg fill="none" stroke="#eee" stroke-width="2"><path d="M10 5h17v16H12M14 26h9M18 22v4M3 4h5v7H3zM5 11v10h5"/></svg>
      <svg fill="none" stroke="#bbb" stroke-width="1.800"><circle cx="14" cy="9" r="5"/><path d="M3 27q0-10 10-10 5 0 6 1"/><circle cx="22" cy="23" r="5"/><path d="M19.500 23h5"/></svg>
      <svg><path d="M3 11h4l7-7v22l-7-7H3z" fill="#eee"/><path d="M17 10q4 5 0 10M21 6q6 9 0 18" fill="none" stroke="#aaa" stroke-width="1.600"/></svg>
      <svg fill="none" stroke="#eee" stroke-width="2"><path d="M5 6h20v21H5zM9 13h12M9 17h12M9 21h7"/><path d="M9 3h12v6H9z" fill="#eee"/></svg>
      <svg><path d="M7 19l8-8 8 8z" fill="#fff"/></svg>
    </div>
    <div class="clock"><div>12:00&nbsp; 下午</div><small>2018/8/7</small></div>
  </footer>
</div>
</body>
</html>
```

FILE: styles.css
```css
* { box-sizing: border-box; }
body { margin: 0; background: #000; width: 1920px; height: 1080px; overflow: hidden; }
.defs { position: absolute; }
svg { display: block; flex: none; }
.app {
  width: 1728px; height: 1080px; margin-left: 96px; display: flex; flex-direction: column; overflow: hidden;
  font: 16px/20px "Noto Sans", "Noto Sans CJK SC", sans-serif; color: #23272c; background: #e9eaec;
  border-bottom: 2px solid #a5a7a9;
}
.caret { display: inline-block; width: 0; height: 0; flex: none; border: 4.5px solid transparent; border-top: 5px solid #66738e; border-bottom: 0; }
.caret.white { border-top-color: #fff; }
.caret.grey { border-top-color: #666a70; }
.caret.pale { border-top-color: #b6b8ba; }
.caret.lg { border-width: 6px 5.5px 0; }
.caret.up { border: 5px solid transparent; border-bottom: 6px solid #5f6c88; border-top: 0; }
.caret.up.pale { border-bottom-color: #d5d6d8; }
.caret.end { border-width: 6px 5px 0; }
.x path { stroke: #6d7177; stroke-width: 1.8; }

/* title bar */
.titlebar { height: 33px; flex: none; display: flex; align-items: flex-start; background: #43464f; color: #e2e3e5; }
.wps { width: 147px; height: 28px; background: #db6a25; display: flex; align-items: center; padding: 0 5px 3px 6px; color: #fff; }
.wps b { font-size: 18.2px; margin-left: 7px; white-space: nowrap; font-weight: 600; }
.wps .caret { margin-left: auto; }
.menu { display: flex; width: 585px; padding: 5px 0 0 28px; gap: 43.4px; white-space: nowrap; }
.menu span { display: block; }
.context { display: flex; height: 33px; width: 232px; background: linear-gradient(#41454c, #2f3337); padding-left: 12px; gap: 25px; }
.context span { width: 92px; height: 34px; padding: 5px 0 0 16px; white-space: nowrap;
  background: linear-gradient(#f4a613, #f4a613) 7px 10px / 6px 15px no-repeat; }
.context .on { color: #fff; border-bottom: 3px solid #f4a613; position: relative; }
.winbtns { margin-left: 493px; width: 272px; }

/* ribbon */
.ribbon { height: 97px; flex: none; display: flex; background: #ebecef; border: 1px solid #e6924d; border-top: 4px solid #eab45b; border-bottom: 2px solid #c8cacd; box-shadow: inset 0 1px #fff0c8; }
.group { margin-top: 5px; height: 81px; border-right: 2px solid #d0d2d6; display: flex; flex-direction: column; }
.w1 { width: 404px; } .w2 { width: 212px; } .w3 { width: 257px; } .w4 { width: 264px; } .w5 { width: 269px; } .w6 { width: 93px; }
.main { display: flex; height: 72px; flex: none; }
.main.col { flex-direction: column; }
.w1 .main { padding-left: 6px; }
.pl9 { padding-left: 9px; } .pl8 { padding-left: 7px; } .pl11 { padding-left: 10px; } .ml6 { margin-left: 6px; }
.launch { width: 8px; height: 7px; margin: 2px 9px 0 auto; border: 1.5px solid #8b8e94; border-right-color: #b9bbc0; border-bottom-color: #b9bbc0; }
.launch.pale { border-color: #b9bbc0; }
.gallery { width: 194px; height: 70px; background: #fff; border: 1.5px solid #b9bcc5; display: flex; flex: none; }
.cells { width: 177px; display: grid; grid-template-columns: repeat(5, 32.5px); grid-template-rows: 34px 33px; place-items: center; }
.cells svg, .sg svg { width: 24px; height: 24px; fill: none; stroke: #44557c; stroke-width: 1.3; overflow: visible; }
.spin { width: 17px; border-left: 1.5px solid #c2c5cc; display: flex; flex-direction: column; }
.spin span { flex: 1; display: flex; align-items: center; justify-content: center; border-bottom: 1.5px solid #c2c5cc; }
.spin span:last-child { border: 0; }
.spin .caret { border-left-width: 4px; border-right-width: 4px; }
.more::before { content: ""; width: 8px; height: 1.5px; background: #666a70; margin: -8px -8px 0 0; }
.big { display: flex; flex: none; flex-direction: column; align-items: center; padding-top: 6px; gap: 4px; white-space: nowrap; }
.big div { display: flex; align-items: center; gap: 5px; height: 20px; }
.c88 { width: 88px; margin-left: 5px; } .c58 { width: 58px; } .c81 { width: 81px; } .c57 { width: 57px; } .c93 { width: 93px; }
.pair { display: flex; flex-direction: column; gap: 8px; }
.w110 { width: 110px; }
.row { height: 30px; display: flex; align-items: center; gap: 6px; white-space: nowrap; }
.pair .row:first-child { height: 29px; }
.row.off { color: #a0a2a5; }
.combo { width: 242px; height: 32px; border: 1.5px solid #c0c3cc; background: #f8faf8; display: flex; }
.combo span { width: 186px; display: flex; align-items: center; justify-content: flex-end; padding: 3px 4px 0 0; }
.combo span + span { width: 54px; border-left: 1.5px solid #c0c3cc; }
.fmt { height: 30px; margin-top: 6px; display: grid; grid-template-columns: 32px 32px 32px 31px 30px 11px 8px 33px 33px; place-items: center; color: #85878a; font-size: 19px; line-height: 24px; }
.fmt em { font-family: "Liberation Serif", serif; font-size: 21px; }
.fmt u { font-size: 17px; }
.fmt strong { text-shadow: 1px 1px 1px #aaa; font-weight: 600; }
.fa { border-bottom: 4px solid #6c6c6c; width: 21px; text-align: center; line-height: 19px; font-size: 20px; }
.fmt sup, .fmt sub { font-size: 10px; line-height: 0; font-weight: bold; }
.vs { width: 1.5px; height: 27px; background: #cfd1d5; }
.tools { display: grid; height: 31px; align-items: center; justify-items: center; }
.tools svg { width: 21px; height: 20px; fill: none; stroke: #8e9094; stroke-width: 1.5; overflow: visible; }
.t1 { grid-template-columns: 23px 14px 27px 13px 8px 28px 26px 7px 26px 8px 26px 26px 14px; padding-left: 9px; }
.t2 { grid-template-columns: 29px 30px 29px 29px 29px 6px 29px 29px 28px 12px; padding-left: 5px; }
.gap9 { gap: 7px; }

/* document area */
.body { height: 877px; flex: none; display: flex; }
.work { width: 1320px; flex: none; display: flex; flex-direction: column; }
.tabbar { height: 34px; flex: none; display: flex; background: #dfe0e2; box-shadow: inset 0 -1.5px #c3c6ca; }
.quick, .qmore { border-bottom: 2px solid #c3c6ca; }
.quick { display: flex; align-items: center; width: 232px; padding-left: 6px; gap: 6.2px; }
.qmore { width: 27px; display: flex; align-items: center; justify-content: center; background: linear-gradient(#c8cacd, #c8cacd) 0 3px / 1px 28px no-repeat; }
.doc { width: 243px; background: #eaebed; border: 2px solid #c3c6ca; border-width: 0 2px; display: flex; align-items: center; padding-left: 3px; }
.lat { font: 16.6px/22px "DejaVu Serif", serif; margin-left: 8px; width: 182px; color: #555a5f; white-space: nowrap; }
.doc .x path { stroke: #5c6675; }
.plus { margin: 8px 0 0 11px; }
.plus path { stroke: #5c6675; stroke-width: 2.4; }
.corner { margin: 9px 8px 0 auto; }
.desk { flex: 1; min-height: 0; display: flex; background: linear-gradient(#ebecef, #d3d4d6); }
.slides { width: 256px; flex: none; border-right: 1.5px solid #c9cbce; display: flex; flex-direction: column; padding-left: 7px; }
.ptabs { height: 42px; width: 242px; flex: none; display: flex; align-items: center; border-bottom: 1.5px solid #b5b9c6; padding: 7px 0 0 6px; }
.ptabs i { width: 1.5px; height: 21px; background: #c2c4c8; margin: 0 6px 0 12px; }
.ptabs .on { color: #e2753a; border-bottom: 3px solid #c78156; padding: 0 5px 4px 6px; margin-bottom: -8px; height: 28px; }
.ptabs .x { margin: -13px 0 0 auto; }
.plist { flex: 1; min-height: 0; display: flex; padding: 8px 0 3px; }
.thumbs { width: 217px; display: flex; flex-direction: column; gap: 21.2px; padding-top: 11px; overflow: hidden; }
.th { display: flex; flex: none; position: relative; height: 103px; }
.th label { width: 44px; flex: none; padding: 0 8px 0 0; text-align: right; font: 16px/17px "DejaVu Serif", serif; font-stretch: condensed; color: #80848a; position: relative; }
.th > svg:last-child { width: 161px; height: 103px; background: #fff; outline: 1.5px solid #bfc1c2; outline-offset: -1px; }
.th.sel > svg:last-child { outline: 2.5px solid #ec9a69; }
.th.sel label { color: #fff; }
.flag { position: absolute; left: 10px; top: -2px; width: 36px; height: 42px; }
.tt text { font-family: "Liberation Serif", "Noto Sans CJK SC", serif; font-size: 15px; fill: #444; }
.tt .s, .tt.s text { font-size: 12px; }
.tt .m { font-size: 15px; }
.tt .b { font-size: 21px; }
.sh { fill: #c9ecf6; stroke: #1f7089; stroke-width: 3.6; }
.ar path { fill: none; stroke: #1f7089; stroke-width: 3; marker-end: url(#tipS); }
.vbar { width: 25px; background: #cfd2d8; display: flex; flex-direction: column; align-items: center; padding: 6px 0; }
.vbar .knob { width: 20px; height: 56px; margin-top: 39px; border: 1.5px solid #bcbfc4; background: linear-gradient(#bbb, #bbb) center 20px / 10px 1px no-repeat, linear-gradient(#bbb, #bbb) center 26px / 10px 1px no-repeat, linear-gradient(#bbb, #bbb) center 32px / 10px 1px no-repeat, #f5f6f5; }
.vbar .end { margin-top: auto; }
.editor { width: 1064px; display: flex; flex-direction: column; }
.stage { height: 795px; flex: none; display: flex; border-bottom: 1.5px solid #bfc2c7; }
.canvas { width: 1039px; padding-left: 24px; display: flex; flex-direction: column; }
.slide { margin-top: 70px; background: linear-gradient(90deg, #f3f5fa 1px, transparent 1px) 0 0 / 12.8px 12.8px, linear-gradient(#f4f6fb 1px, transparent 1px) 0 0 / 12.8px 12.8px, #fff; box-shadow: 0 0 0 1px #bfc1c8, 0 0 9px 3px #c5c7cc; }
.vbar.ed { width: 25px; margin-left: auto; padding: 13px 0 10px; }
.vbar.ed .end { margin-bottom: 6px; }
.vbar.ed svg { margin-bottom: 16px; }
.hbar { margin: auto 0 0 -22px; height: 24px; display: flex; justify-content: space-between; align-items: center; padding: 0 6px; background: rgba(208, 211, 217, .45); }
.hbar i { border: 5px solid transparent; }
.hbar .la { border-right: 6px solid #bfc3c7; border-left: 0; }
.hbar .ra { border-left: 6px solid #bfc3c7; border-right: 0; }
.notes { padding: 9px 0 0 17px; font-size: 21.5px; line-height: 24px; color: #3a3d40; }
.mg { font: 900 23px "Noto Sans CJK SC", sans-serif; fill: #1a1a1a; }
.it { font: italic 10.2px "Noto Sans CJK SC", sans-serif; fill: #222; }
.shape { fill: #c9ecf6; stroke: #34798f; stroke-width: 1.5; }
.wire path { fill: none; stroke: #2f7a90; stroke-width: 1.4; marker-end: url(#tip); }
.wire .both { marker-start: url(#tip); }
.etcd text { font: 24.5px "Liberation Serif", serif; text-anchor: middle; fill: #111; }
.grips { fill: #fdfdfd; stroke: #83878f; stroke-width: 1.3; }

/* side strip */
.strip { width: 55px; flex: none; background: #eaebee; border: 2px solid #c4c7cc; border-width: 0 2px; }
.grip { display: block; width: 20px; height: 4px; border: 1.5px solid #d0d2d8; border-width: 1.5px 0; margin: 15px auto 23px 17px; }
.strip div { height: 64.9px; display: flex; flex-direction: column; align-items: center; gap: 5px; padding-left: 4px; position: relative; }
.strip svg { width: 22px; height: 22px; fill: #6b707b; }
.strip .on svg { fill: #ec8c35; }
.strip .on::after { content: ""; position: absolute; right: -6px; top: 9px; width: 9px; height: 9px; border: 1.5px solid #c4c7cc; border-width: 0 0 1.5px 1.5px; transform: rotate(45deg); background: #f6f6f4; }

/* shapes panel */
.panel { width: 346px; flex: none; display: flex; flex-direction: column; background: #f6f6f5; border-right: 1.5px solid #c4c7cc; }
.panel header { height: 34px; flex: none; background: #eaebed; border-bottom: 2px solid #c4c7cc; display: flex; align-items: center; padding: 0 8px 0 13px; margin-left: 0; }
.panel header span { margin-left: -4px; }
.panel header .caret { margin-left: 10px; }
.panel header .x { margin-left: auto; }
.pbody { padding: 5px 8px 0 9px; }
.pbody p { margin: 0; height: 22px; line-height: 20px; }
.pbody .second { margin-top: 6px; height: 25px; line-height: 22px; }
.select { width: 329px; height: 27px; border: 1.5px solid #b4b7bb; background: #fcfdfc; display: flex; align-items: center; justify-content: space-between; padding: 0 8px 2px 6px; color: #4a4e50; }
.lib { width: 329px; height: 704px; border: 1.5px solid #d0d2d0; background: #fefffe; display: flex; overflow: hidden; }
.libs { width: 301px; }
.lib h4 { margin: 0 0 0 1px; width: 294px; height: 27px; background: #e7e8e6; font-weight: 400; line-height: 24px; padding-left: 11px; color: #63676a; }
.sg { display: grid; grid-template-columns: repeat(7, 41.8px); grid-auto-rows: 37.8px; place-items: center; padding-left: 1px; }
.sg.f svg { fill: url(#shade); stroke: #6f83aa; stroke-width: 1.2; }
.lbar { width: 23px; margin-left: 1px; background: #f1f2f1; display: flex; flex-direction: column; align-items: center; padding: 9px 0 9px; }
.lbar .knob { width: 22px; height: 406px; margin-top: 9px; border: 1.5px solid #c0c2c6; background: linear-gradient(#bbb, #bbb) center 196px / 10px 1px no-repeat, linear-gradient(#bbb, #bbb) center 202px / 10px 1px no-repeat, linear-gradient(#bbb, #bbb) center 208px / 10px 1px no-repeat, #f4f5f4; }
.lbar .end { margin-top: auto; }
.chg { width: 105px; height: 31px; margin-top: 13px; padding: 0 0 3px; border: 1.5px solid #b9bbbc; background: #e9e9e8; color: #a0a2a3; font: 16px/20px "Noto Sans CJK SC", sans-serif; white-space: nowrap; }
.edge { width: 7px; background: #eaebed; padding-top: 399px; }
.edge div { height: 136px; background: #e96516; padding-top: 64px; }
.edge i { display: block; width: 0; border: 4px solid transparent; border-left: 5px solid #fff; border-right: 0; margin-left: 1px; }

/* status bar */
.status { height: 31px; flex: none; display: flex; align-items: center; background: linear-gradient(#dddee0 85%, #a9abad); border-top: 1.5px solid #bfc2c6; color: #3a3e42; white-space: nowrap; }
.s1, .s2, .pct { font-family: "DejaVu Serif", "Noto Sans CJK SC", serif; }
.s1 { width: 475px; padding-left: 177px; border-right: 1.5px solid #b5b8bb; line-height: 25px; }
.s2 { width: 643px; padding-left: 92px; border-right: 1.5px solid #b5b8bb; line-height: 25px; font-stretch: condensed; }
.s3 { width: 90px; display: flex; align-items: center; gap: 6px; padding-left: 5px; border-right: 1.5px solid #b5b8bb; line-height: 25px; }
.blue { width: 10px; height: 10px; background: #0a6fe8; }
.s4 { display: flex; align-items: center; gap: 6px; padding-left: 7px; width: 82px; }
.vw { width: 30px; height: 28px; display: flex; align-items: center; justify-content: center; margin-right: 7.5px; }
.vw.on { background: #efb896; }
.pct { margin: -3px 13px 0 12px; width: 43px; line-height: 22px; font-size: 15.5px; }

/* task bar */
.taskbar { height: 40px; flex: none; display: flex; align-items: flex-start; background: linear-gradient(#30353a, #31322f); color: #e8e9ea; white-space: nowrap; }
.kick { margin: 7px 10px 0 9px; }
.pager { width: 56px; height: 37px; display: grid; grid-template-columns: 27px 27px; gap: 1.5px; margin-top: 1px; }
.pager i { background: #3c4048; }
.pager .a { background: #77bde0; }
.pager .b { background: #656769; border: 1px solid #a4a5a6; }
.crt { margin: 5px 18px 0 10px; }
.srv { margin: 6px 8px 0 0; }
.task { width: 211px; flex: none; height: 40px; margin-right: 2.2px; display: flex; align-items: center; gap: 7px; padding: 3px 0 0 5px; border-top: 4px solid #4b4f53; font-size: 17.3px; overflow: hidden; }
.task svg { margin-top: -3px; }
.task span { margin-top: -4px; }
.kate { padding-left: 9px; gap: 9px; }
.hi { background: #4b4f52; }
.act { border-top-color: #2e74b8; }
.tray { display: flex; gap: 5.1px; margin: 6px 0 0 14px; }
.tray svg { width: 30px; height: 30px; }
.clock { margin-left: auto; padding-right: 2px; width: 112px; text-align: center; font-size: 20px; line-height: 23px; color: #c9cacb; font-weight: 300; }
.clock small { display: block; font-size: 15px; line-height: 15px; }
```
